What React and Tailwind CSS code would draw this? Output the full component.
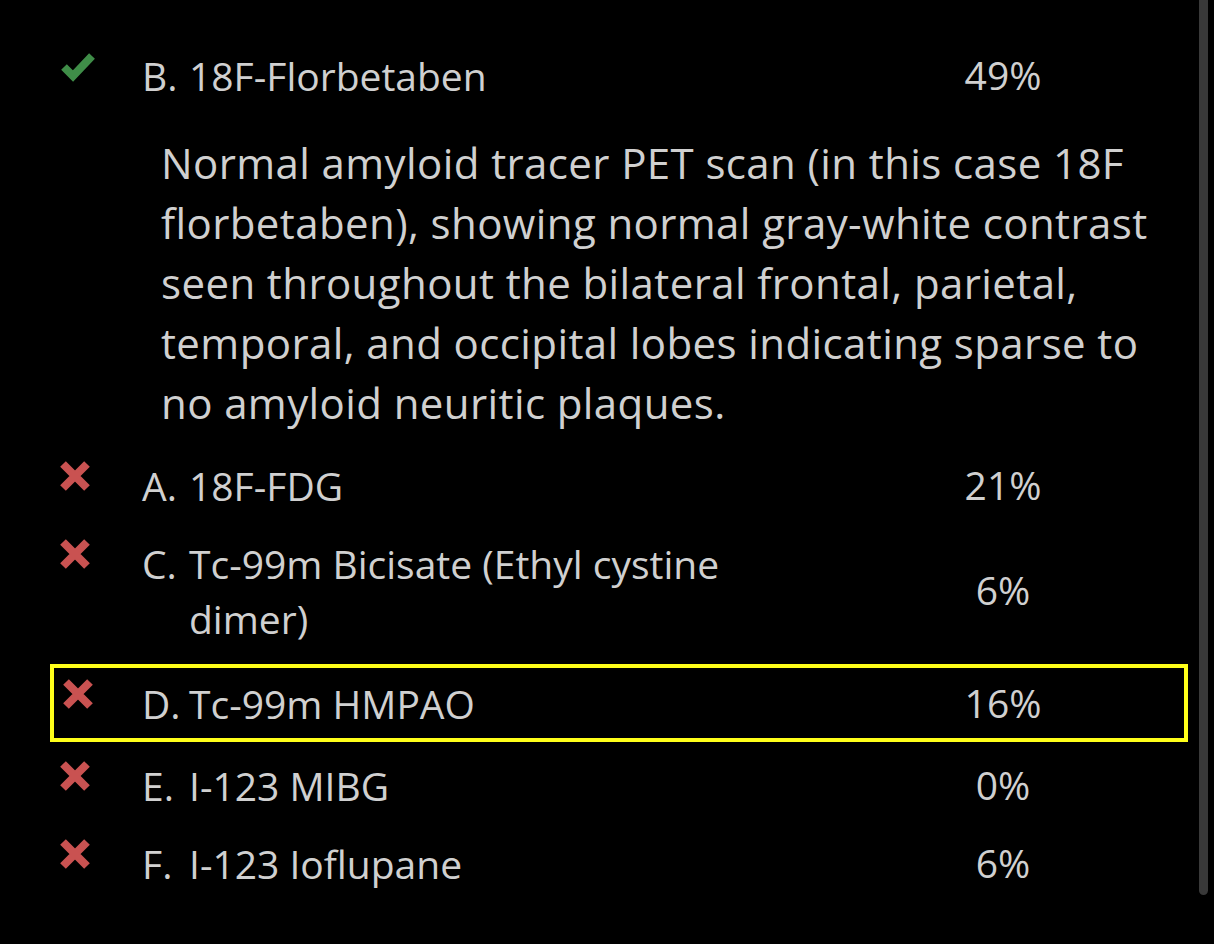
import React from "react";

const Check = () => (
  <svg width="38" height="34" viewBox="0 0 38 34" className="block">
    <path d="M5 18 L14 27 L33 7" fill="none" stroke="#3f8d48" strokeWidth="8" strokeLinecap="butt" strokeLinejoin="miter" />
  </svg>
);

const Cross = () => (
  <svg width="34" height="34" viewBox="0 0 34 34" className="block">
    <path d="M5 5 L29 29 M29 5 L5 29" fill="none" stroke="#c95251" strokeWidth="8" strokeLinecap="butt" />
  </svg>
);

function Row({ ok, letter, text, pct, selected, tall }) {
  return (
    <div
      className={
        "flex items-center border-[4px] " +
        (selected ? "border-[#ffff1a] mt-[7px] mb-[4px]" : "border-transparent") +
        (tall ? " h-[133px]" : " h-[78px]")
      }
    >
      <div className="w-[88px] shrink-0 self-stretch flex">
        <div className={ok ? "pl-[5px] pt-[9px]" : selected ? "pl-[7px] pt-[9px]" : "pl-[4px] pt-[9px]"}>
          {ok ? <Check /> : <Cross />}
        </div>
      </div>
      <div className="w-[637px] shrink-0 flex items-start leading-[55px]">
        <div className="w-[47px] shrink-0">{letter}</div>
        <div className="w-[590px] shrink-0">{text}</div>
      </div>
      <div className="w-[160px] ml-[144px] text-center">{pct}</div>
    </div>
  );
}

export default function App() {
  return (
    <div className="w-[1214px] h-[944px] bg-black flex overflow-hidden text-[#d0d0d0]" style={{ fontFamily: "'Open Sans', 'Noto Sans', sans-serif" }}>
      <div className="ml-[50px] w-[1138px] pt-[36px] text-[39px]">
        <Row ok letter="B." text="18F-Florbetaben" pct="49%" />
        <p className="mt-[19px] mb-[13px] ml-[111px] text-[42px] tracking-[0.4px] leading-[60px] whitespace-nowrap">
          Normal amyloid tracer PET scan (in this case 18F
          <br />
          florbetaben), showing normal gray-white contrast
          <br />
          seen throughout the bilateral frontal, parietal,
          <br />
          temporal, and occipital lobes indicating sparse to
          <br />
          no amyloid neuritic plaques.
        </p>
        <Row letter="A." text="18F-FDG" pct="21%" />
        <Row letter="C." text="Tc-99m Bicisate (Ethyl cystine dimer)" pct="6%" tall />
        <Row letter="D." text="Tc-99m HMPAO" pct="16%" selected />
        <Row letter="E." text="I-123 MIBG" pct="0%" />
        <Row letter="F." text="I-123 Ioflupane" pct="6%" />
      </div>
      <div className="ml-[11px] w-[9px] h-[895px] bg-[#393939] rounded-b-full" />
    </div>
  );
}
